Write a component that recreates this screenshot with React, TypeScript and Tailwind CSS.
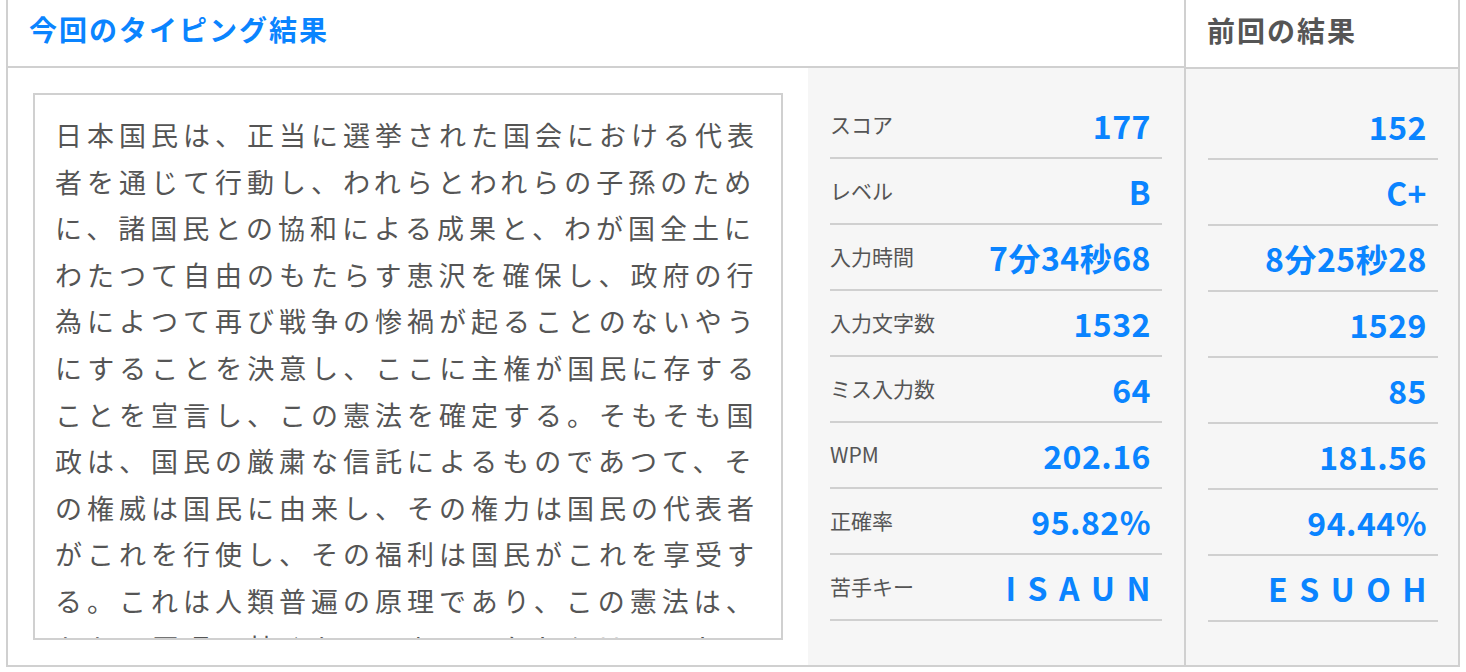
import React from "react";

const lines = [
  "日本国民は、正当に選挙された国会における代表",
  "者を通じて行動し、われらとわれらの子孫のため",
  "に、諸国民との協和による成果と、わが国全土に",
  "わたつて自由のもたらす恵沢を確保し、政府の行",
  "為によつて再び戦争の惨禍が起ることのないやう",
  "にすることを決意し、ここに主権が国民に存する",
  "ことを宣言し、この憲法を確定する。そもそも国",
  "政は、国民の厳粛な信託によるものであつて、そ",
  "の権威は国民に由来し、その権力は国民の代表者",
  "がこれを行使し、その福利は国民がこれを享受す",
  "る。これは人類普遍の原理であり、この憲法は、",
  "かかる原理に基くものである。われらは、これに",
];

type Row = { label: string; cur: string; prev: string; keys?: boolean };

const rows: Row[] = [
  { label: "スコア", cur: "177", prev: "152" },
  { label: "レベル", cur: "B", prev: "C+" },
  { label: "入力時間", cur: "7分34秒68", prev: "8分25秒28" },
  { label: "入力文字数", cur: "1532", prev: "1529" },
  { label: "ミス入力数", cur: "64", prev: "85" },
  { label: "WPM", cur: "202.16", prev: "181.56" },
  { label: "正確率", cur: "95.82%", prev: "94.44%" },
  { label: "苦手キー", cur: "ISAUN", prev: "ESUOH", keys: true },
];

function Value({ v, keys }: { v: string; keys?: boolean }) {
  if (keys) {
    return (
      <span className="flex gap-[11px]">
        {v.split("").map((c, i) => (
          <span key={i}>{c}</span>
        ))}
      </span>
    );
  }
  return <span>{v}</span>;
}

export default function App() {
  return (
    <div
      className="w-full h-[672px] bg-white overflow-hidden"
      style={{ fontFamily: '"Noto Sans CJK JP", "Noto Sans", sans-serif' }}
    >
      <div className="mx-[6px] h-[667px] border-2 border-t-0 border-[#d0d0d0] flex">
        {/* Left column */}
        <div className="w-[1178px] border-r-2 border-[#d0d0d0] flex flex-col">
          <div className="h-[69px] border-b-2 border-[#d0d0d0] flex items-center pl-[21px] pb-[8px]">
            <h2 className="text-[28px] font-bold text-[#0a84ff] tracking-[2px] leading-none">
              今回のタイピング結果
            </h2>
          </div>
          <div className="flex flex-1">
            <div className="w-[800px] p-[25px] bg-white">
              <div className="h-[547px] border-2 border-[#d0d0d0] overflow-hidden pl-[20px] pt-[17px]">
                <div className="text-[27px] leading-[46.6px] tracking-[5px] text-[#555] whitespace-nowrap">
                  {lines.map((l, i) => (
                    <div key={i}>{l}</div>
                  ))}
                </div>
              </div>
            </div>
            <div className="flex-1 bg-[#f6f6f6] px-[22px] pt-[25px]">
              {rows.map((r) => (
                <div
                  key={r.label}
                  className="h-[66px] border-b-2 border-[#d0d0d0] flex items-center justify-between pr-[11px]"
                >
                  <span className="text-[21px] text-[#555]">{r.label}</span>
                  <span className="text-[32px] font-bold text-[#0a84ff] leading-none tracking-[0.5px]">
                    <Value v={r.cur} keys={r.keys} />
                  </span>
                </div>
              ))}
            </div>
          </div>
        </div>
        {/* Right column */}
        <div className="flex-1 flex flex-col">
          <div className="h-[69px] border-b-2 border-[#d0d0d0] flex items-center pl-[21px] pb-[8px]">
            <h2 className="text-[28px] font-bold text-[#555] tracking-[2px] leading-none">
              前回の結果
            </h2>
          </div>
          <div className="flex-1 bg-[#f6f6f6] pl-[22px] pr-[20px] pt-[25px]">
            {rows.map((r) => (
              <div
                key={r.label}
                className="h-[66px] border-b-2 border-[#d0d0d0] flex items-center justify-end pr-[11px]"
              >
                <span className="text-[32px] font-bold text-[#0a84ff] leading-none tracking-[0.5px]">
                  <Value v={r.prev} keys={r.keys} />
                </span>
              </div>
            ))}
          </div>
        </div>
      </div>
    </div>
  );
}
